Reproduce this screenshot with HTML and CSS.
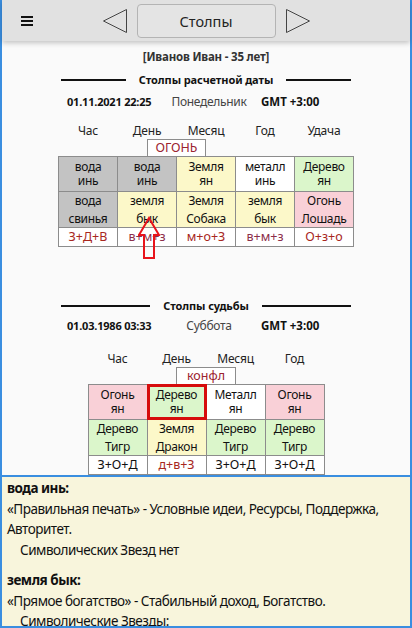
FILE: index.html
```html
<!DOCTYPE html>
<html lang="ru">
<head>
<meta charset="utf-8">
<title>Столпы</title>
<link rel="stylesheet" href="styles.css">
</head>
<body>
<div class="app">
  <header class="toolbar">
    <div class="menu"><span></span><span></span><span></span></div>
    <div class="nav">
      <svg class="nav-arrow" width="25" height="26" viewBox="0 0 25 26"><polygon points="0.5,13 23.5,1.5 23.5,24.5"/></svg>
      <div class="title-btn">Столпы</div>
      <svg class="nav-arrow" width="25" height="26" viewBox="0 0 25 26"><polygon points="24.5,13 1.5,1.5 1.5,24.5"/></svg>
    </div>
    <div></div>
  </header>

  <main class="content">
    <div class="person">[Иванов Иван - 35 лет]</div>

    <section class="pillars first">
      <div class="divider"><span>Столпы расчетной даты</span></div>
      <div class="dateline"><b class="date">01.11.2021 22:25</b><span class="weekday">Понедельник</span><b class="tz">GMT +3:00</b></div>
      <div class="heads five"><span>Час</span><span>День</span><span>Месяц</span><span>Год</span><span>Удача</span></div>
      <div class="badge-row five"><div class="badge">ОГОНЬ</div></div>
      <div class="ptable five">
        <div class="cell top gray">вода<br>инь</div>
        <div class="cell top gray">вода<br>инь</div>
        <div class="cell top yellow">Земля<br>ян</div>
        <div class="cell top white">металл<br>инь</div>
        <div class="cell top green">Дерево<br>ян</div>
        <div class="cell mid gray">вода<br>свинья</div>
        <div class="cell mid yellow">земля<br>бык</div>
        <div class="cell mid yellow">Земля<br>Собака</div>
        <div class="cell mid yellow">земля<br>бык</div>
        <div class="cell mid pink">Огонь<br>Лошадь</div>
        <div class="cell bot red">З+Д+В</div>
        <div class="cell bot plum">в+м+з</div>
        <div class="cell bot red">м+о+З</div>
        <div class="cell bot plum">в+м+з</div>
        <div class="cell bot red">О+з+о</div>
      </div>
      <svg class="pointer" width="22" height="44" viewBox="0 0 22 44"><polygon points="11,2 21,19 16,19 16,42 6,42 6,19 1,19"/></svg>
    </section>

    <section class="pillars second">
      <div class="divider"><span>Столпы судьбы</span></div>
      <div class="dateline"><b class="date">01.03.1986 03:33</b><span class="weekday">Суббота</span><b class="tz">GMT +3:00</b></div>
      <div class="heads four"><span>Час</span><span>День</span><span>Месяц</span><span>Год</span></div>
      <div class="badge-row four"><div class="badge">конфл</div></div>
      <div class="ptable four">
        <div class="cell top pink">Огонь<br>ян</div>
        <div class="cell top green selected">Дерево<br>ян</div>
        <div class="cell top white">Металл<br>ян</div>
        <div class="cell top pink">Огонь<br>ян</div>
        <div class="cell mid green">Дерево<br>Тигр</div>
        <div class="cell mid yellow">Земля<br>Дракон</div>
        <div class="cell mid green">Дерево<br>Тигр</div>
        <div class="cell mid green">Дерево<br>Тигр</div>
        <div class="cell bot">З+О+Д</div>
        <div class="cell bot red">д+в+З</div>
        <div class="cell bot">З+О+Д</div>
        <div class="cell bot">З+О+Д</div>
      </div>
    </section>
  </main>

  <footer class="info">
    <p class="term">вода инь:</p>
    <p>«Правильная печать» - Условные идеи, Ресурсы, Поддержка, Авторитет.</p>
    <p class="stars">Символических Звезд нет</p>
    <p class="blank"></p>
    <p class="term">земля бык:</p>
    <p>«Прямое богатство» - Стабильный доход, Богатство.</p>
    <p class="stars">Символические Звезды:</p>
  </footer>
</div>
</body>
</html>
```

FILE: styles.css
```css
* { box-sizing: border-box; }

html, body {
  margin: 0;
  padding: 0;
}

body {
  width: 412px;
  height: 628px;
  overflow: hidden;
  background: #fafafa;
  font-family: "Noto Sans", "Open Sans", sans-serif;
  color: #111;
}

.app {
  height: 628px;
  display: flex;
  flex-direction: column;
  border-left: 2px solid #3a8ee0;
  border-right: 2px solid #3a8ee0;
}

/* toolbar */
.toolbar {
  height: 41px;
  flex: none;
  background: #e1e1e1;
  display: grid;
  grid-template-columns: 1fr auto 1fr;
  align-items: center;
  box-shadow: 0 2px 5px rgba(0, 0, 0, 0.22);
  position: relative;
  z-index: 1;
}

.menu {
  display: flex;
  flex-direction: column;
  gap: 2px;
  width: 12px;
  margin-left: 19px;
  margin-top: 1px;
}

.menu span {
  display: block;
  height: 2px;
  background: #111;
}

.nav {
  display: flex;
  align-items: center;
  gap: 8px;
}

.nav-arrow polygon {
  fill: none;
  stroke: #444;
  stroke-width: 1;
}

.title-btn {
  width: 139px;
  height: 34px;
  margin: 0 1px;
  border: 1px solid #b4b4b4;
  border-radius: 4px;
  background: #e4e4e4;
  display: flex;
  align-items: center;
  justify-content: center;
  font-size: 14.5px;
  color: #222;
}

/* content */
.content {
  flex: 1;
  overflow: hidden;
  padding-top: 8px;
  display: flex;
  flex-direction: column;
  align-items: center;
}

.person {
  font-size: 11.5px;
  letter-spacing: -0.2px;
  font-weight: bold;
  line-height: 16px;
  color: #333;
}

.pillars {
  position: relative;
  width: 100%;
  display: flex;
  flex-direction: column;
  align-items: center;
}

.pillars.first { margin-top: 7px; }
.pillars.second { margin-top: 51px; }

.divider {
  width: 290px;
  display: flex;
  align-items: center;
  gap: 13px;
  font-size: 11px;
  letter-spacing: -0.1px;
  font-weight: bold;
  line-height: 16px;
  color: #111;
}

.divider::before,
.divider::after {
  content: "";
  flex: 1;
  height: 2px;
  background: #111;
}

.dateline {
  width: 278px;
  margin-top: 6px;
  display: grid;
  grid-template-columns: 104px 76px 1fr;
  line-height: 16px;
}

.second .dateline { margin-top: 4px; }

.date {
  font-size: 11px;
  letter-spacing: -0.2px;
  white-space: nowrap;
}

.tz {
  padding-left: 14px;
  font-size: 11.5px;
  white-space: nowrap;
}

.weekday {
  text-align: center;
  font-size: 12px;
  letter-spacing: -0.3px;
  color: #444;
  white-space: nowrap;
}

.heads {
  margin-top: 12px;
  display: grid;
  font-size: 12px;
  letter-spacing: -0.2px;
  line-height: 17px;
  color: #222;
  text-align: center;
}

.second .heads { margin-top: 16px; }

.heads.five { grid-template-columns: repeat(5, 59px); }
.heads.four { grid-template-columns: repeat(4, 59px); }

.badge-row {
  display: grid;
}

.badge-row.five { width: 296px; grid-template-columns: repeat(10, 1fr); }
.badge-row.four { width: 237px; grid-template-columns: repeat(8, 1fr); }

.badge {
  grid-column: 4 / 6;
  height: 17px;
  border: 1px solid #8c8c8c;
  border-bottom: none;
  background: #fff;
  color: #9b2330;
  font-size: 12.5px;
  line-height: 16px;
  text-align: center;
}

.ptable {
  display: grid;
  gap: 1px;
  padding: 1px;
  background: #8c8c8c;
}

.ptable.five { grid-template-columns: repeat(5, 58px); }
.ptable.four { grid-template-columns: repeat(4, 58px); }

.cell {
  display: flex;
  align-items: center;
  justify-content: center;
  text-align: center;
  background: #fff;
  color: #111;
  font-size: 12px;
  letter-spacing: -0.3px;
}

.cell.top {
  height: 34px;
  line-height: 14px;
}

.cell.mid {
  height: 35px;
  line-height: 18px;
}

.cell.bot {
  height: 18px;
  line-height: 16px;
  font-size: 12.5px;
  letter-spacing: 0;
}

.gray { background: #c3c3c3; }
.yellow { background: #fcf8c9; }
.green { background: #dbf6cb; }
.pink { background: #f9d0d7; }
.white { background: #fff; }

.cell.red { color: #a8281e; }
.cell.plum { color: #8c2e4a; }

.selected {
  outline: 3px solid #d60c0c;
  outline-offset: -2px;
  position: relative;
}

.pointer {
  position: absolute;
  left: 136px;
  top: 144px;
}

.pointer polygon {
  fill: none;
  stroke: #e8141b;
  stroke-width: 2;
  stroke-linejoin: miter;
}

/* info panel */
.info {
  flex: none;
  height: 153px;
  background: #f8f5dc;
  border-top: 2px solid #3a8ee0;
  border-bottom: 2px solid #3a8ee0;
  padding: 1px 5px 0 5px;
  font-size: 13.5px;
  letter-spacing: -0.5px;
  line-height: 20.5px;
  color: #111;
  overflow: hidden;
}

.info p {
  margin: 0;
}

.info .term {
  font-weight: bold;
}

.info .stars {
  padding-left: 13px;
}

.info .blank {
  height: 10px;
}
```
